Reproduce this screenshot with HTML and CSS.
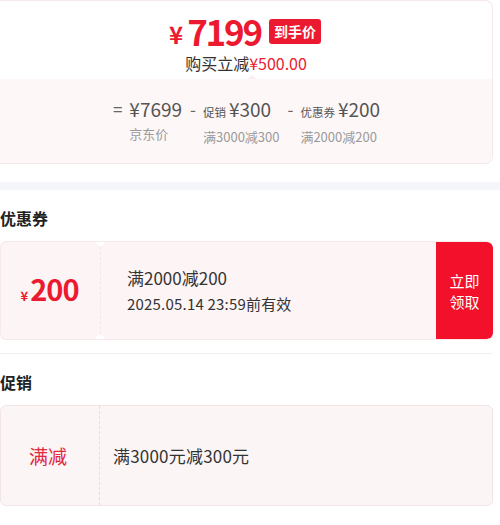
FILE: index.html
```html
<!DOCTYPE html>
<html lang="zh-CN">
<head>
<meta charset="utf-8">
<title>到手价</title>
<link rel="stylesheet" href="styles.css">
</head>
<body>
<div class="page">
  <div class="price-card">
    <div class="price-top">
      <div class="price-row">
        <span class="price-yen">¥</span><span class="price-num">7199</span><span class="badge">到手价</span>
      </div>
      <div class="price-sub">购买立减<span class="red">¥500.00</span></div>
    </div>
    <div class="price-bottom">
      <div class="calc">
        <span class="op">=</span>
        <div class="calc-item">
          <div class="calc-main"><span class="amt">¥7699</span></div>
          <div class="calc-note">京东价</div>
        </div>
        <span class="op">-</span>
        <div class="calc-item">
          <div class="calc-main"><span class="lbl">促销</span><span class="amt">¥300</span></div>
          <div class="calc-note">满3000减300</div>
        </div>
        <span class="op">-</span>
        <div class="calc-item">
          <div class="calc-main"><span class="lbl">优惠券</span><span class="amt">¥200</span></div>
          <div class="calc-note">满2000减200</div>
        </div>
      </div>
    </div>
  </div>

  <div class="band"></div>

  <h2 class="section-title">优惠券</h2>
  <div class="coupon">
    <div class="coupon-value"><span class="cv-yen">¥</span><span class="cv-num">200</span></div>
    <div class="coupon-info">
      <div class="ci-title">满2000减200</div>
      <div class="ci-date">2025.05.14 23:59前有效</div>
    </div>
    <div class="coupon-btn">立即<br>领取</div>
  </div>

  <div class="divider"></div>

  <h2 class="section-title">促销</h2>
  <div class="promo">
    <div class="promo-tag">满减</div>
    <div class="promo-text">满3000元减300元</div>
  </div>
</div>
</body>
</html>
```

FILE: styles.css
```css
* { box-sizing: border-box; }
html, body { margin: 0; padding: 0; background: #fff; }
body {
  font-family: "Noto Sans CJK SC", "Noto Sans", sans-serif;
  color: #333;
}
.page { width: 500px; }

.price-card {
  width: 493px;
  height: 164px;
  border: 1px solid #f6e7ea;
  border-left: none;
  border-radius: 0 8px 8px 0;
  overflow: hidden;
  display: flex;
  flex-direction: column;
}
.price-top {
  height: 78px;
  padding-top: 12px;
  display: flex;
  flex-direction: column;
  align-items: center;
  position: relative;
}
.price-top::after {
  content: "";
  position: absolute;
  left: 247px;
  bottom: 0;
  border-left: 5px solid transparent;
  border-right: 5px solid transparent;
  border-bottom: 4px solid #fbeef0;
}
.price-row {
  display: flex;
  align-items: center;
  height: 36px;
  color: #ec1a30;
  margin-left: -2px;
}
.price-yen { font-size: 24px; font-weight: 700; margin-right: 4px; margin-top: 5px; }
.price-num { font-size: 35px; font-weight: 700; letter-spacing: -2.2px; line-height: 36px; }
.badge {
  margin-left: 8px;
  background: #ec1a30;
  color: #fff;
  font-size: 14px;
  font-weight: 700;
  height: 25px;
  line-height: 25px;
  padding: 0 5px;
  border-radius: 3px;
}
.price-sub {
  font-size: 16px;
  line-height: 20px;
  color: #333;
  margin-top: 4px;
}
.red { color: #ec1a30; }

.price-bottom {
  flex: 1;
  background: #fdf7f7;
  display: flex;
  justify-content: center;
  align-items: center;
}
.calc {
  display: flex;
  align-items: flex-start;
  margin-left: 1px;
}
.op {
  font-size: 17px;
  line-height: 24px;
  color: #666;
  margin: 0 7px 0 0;
}
.calc-item { margin-right: 8px; }
.calc-item:last-child { margin-right: 0; }
.calc-main {
  display: flex;
  align-items: baseline;
  line-height: 24px;
  color: #555;
}
.lbl { font-size: 11.5px; margin-right: 3px; color: #555; }
.amt { font-size: 19px; }
.calc-note {
  font-size: 13px;
  line-height: 18px;
  margin-top: 4px;
  color: #9a9a9a;
}

.band {
  height: 8px;
  margin-top: 18px;
  background: #f5f6f9;
}

.section-title {
  margin: 16px 0 0;
  font-size: 16px;
  line-height: 24px;
  font-weight: 700;
  color: #222;
}

.coupon {
  margin-top: 11px;
  width: 493px;
  height: 99px;
  display: flex;
  background: #fdf4f5;
  border: 1px solid #f8e9eb;
  border-right: none;
  border-radius: 6px;
  overflow: hidden;
  position: relative;
}
.coupon-value {
  width: 100px;
  display: flex;
  align-items: baseline;
  justify-content: center;
  padding-top: 29px;
  color: #ec1a30;
  position: relative;
  border-right: 1px dashed #f6e6e8;
  padding-right: 2px;
}
.coupon-value::before,
.coupon-value::after {
  content: "";
  position: absolute;
  right: -5px;
  width: 9px;
  height: 9px;
  border-radius: 50%;
  background: #fff;
}
.coupon-value::before { top: -5px; }
.coupon-value::after { bottom: -5px; }
.cv-yen { font-size: 13px; font-weight: 700; margin-right: 2px; }
.cv-num { font-size: 29px; font-weight: 700; letter-spacing: -1px; line-height: 34px; }
.coupon-info {
  flex: 1;
  padding: 24px 0 0 26px;
  color: #333;
}
.ci-title { font-size: 17px; line-height: 24px; }
.ci-date { font-size: 15px; line-height: 22px; margin-top: 3px; letter-spacing: 0.2px; }
.coupon-btn {
  width: 57px;
  background: #f3102a;
  color: #fff;
  font-size: 15px;
  line-height: 21px;
  display: flex;
  align-items: center;
  justify-content: center;
  text-align: center;
  border-radius: 0 6px 6px 0;
}

.divider {
  margin-top: 13px;
  width: 492px;
  height: 1px;
  background: #efeff1;
}

.promo {
  margin-top: 11px;
  width: 493px;
  height: 101px;
  display: flex;
  align-items: stretch;
  background: #fcf5f6;
  border: 1px solid #f3e4e6;
  border-radius: 6px;
}
.promo-tag {
  width: 99px;
  display: flex;
  align-items: center;
  justify-content: center;
  font-size: 19px;
  color: #e2283b;
  border-right: 1px dashed #e8dcde;
  padding-right: 4px;
}
.promo-text {
  display: flex;
  align-items: center;
  padding-left: 13px;
  font-size: 17px;
  color: #333;
  letter-spacing: 0.2px;
}
```
